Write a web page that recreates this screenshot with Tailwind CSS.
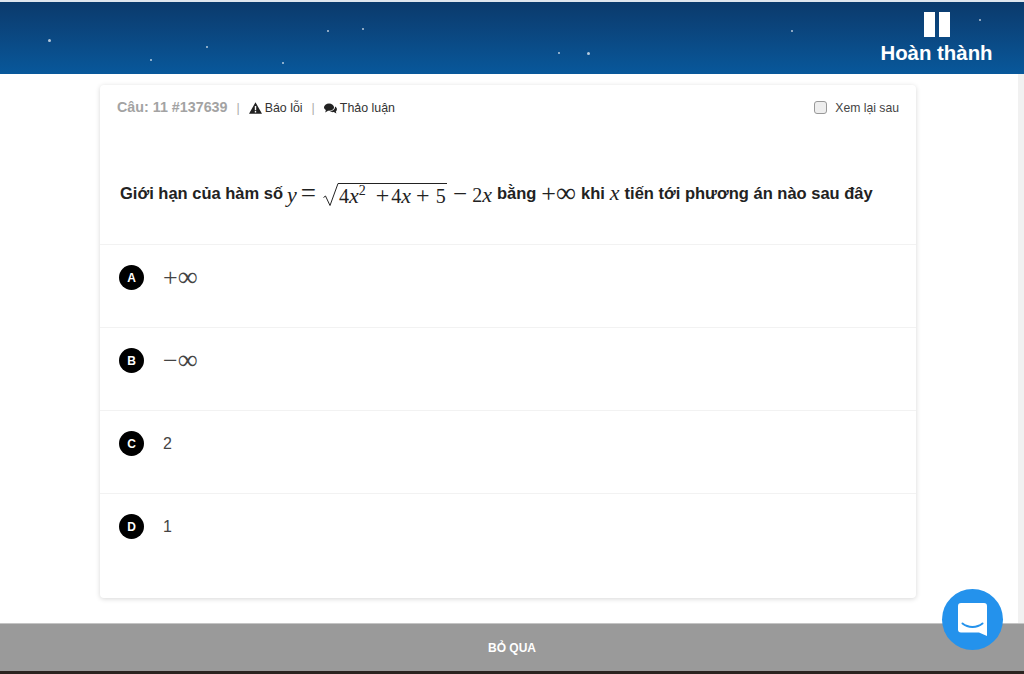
<!DOCTYPE html>
<html lang="vi">
<head>
    <meta charset="UTF-8">
    <meta name="viewport" content="width=device-width, initial-scale=1.0">
    <title>Câu hỏi</title>
    <script src="https://cdn.jsdelivr.net/npm/@tailwindcss/browser@4"></script>
</head>
<body class="font-['Liberation_Sans',Arial,sans-serif] overflow-hidden">
    <div class="relative flex flex-col w-[1024px] h-[674px] bg-white">
        <!-- Header -->
        <header class="relative h-[74px] shrink-0 border-t-2 border-[#dfe6ee] bg-gradient-to-b from-[#0b3a6c] to-[#08589b] flex justify-end">
            <span class="absolute left-[48px] top-[37px] w-[3px] h-[3px] rounded-full bg-white/70"></span>
            <span class="absolute left-[150px] top-[57px] w-[2px] h-[2px] rounded-full bg-white/70"></span>
            <span class="absolute left-[206px] top-[44px] w-[2px] h-[2px] rounded-full bg-white/70"></span>
            <span class="absolute left-[282px] top-[60px] w-[2px] h-[2px] rounded-full bg-white/70"></span>
            <span class="absolute left-[327px] top-[28px] w-[2px] h-[2px] rounded-full bg-white/70"></span>
            <span class="absolute left-[362px] top-[26px] w-[2px] h-[2px] rounded-full bg-white/70"></span>
            <span class="absolute left-[558px] top-[50px] w-[2px] h-[2px] rounded-full bg-white/70"></span>
            <span class="absolute left-[587px] top-[50px] w-[3px] h-[3px] rounded-full bg-white/70"></span>
            <span class="absolute left-[791px] top-[28px] w-[2px] h-[2px] rounded-full bg-white/70"></span>
            <span class="absolute left-[979px] top-[17px] w-[2px] h-[2px] rounded-full bg-white/70"></span>
            <div class="w-[174px] pr-[1px] pt-[10px] flex flex-col items-center">
                <div class="flex gap-[4px]">
                    <span class="w-[11px] h-[25px] bg-white"></span>
                    <span class="w-[11px] h-[25px] bg-white"></span>
                </div>
                <span class="mt-[4px] text-[20.4px] leading-[24px] font-bold text-white">Hoàn thành</span>
            </div>
        </header>

        <!-- Main -->
        <main class="flex-1 flex justify-between min-h-0">
            <div class="w-[1018px] pl-[100px] pt-[11px]">
                <div class="w-[816px] h-[513px] bg-white rounded-[4px] shadow-[0_1px_5px_rgba(0,0,0,0.16)]">
                    <div class="h-[46px] px-[17px] flex items-center justify-between">
                        <div class="flex items-center text-[12.4px] text-[#333]">
                            <span class="text-[14.3px] font-bold text-[#a3a3a3]">Câu: 11 #137639</span>
                            <span class="mx-[9px] text-[#aaa]">|</span>
                            <svg class="w-[13px] h-[12px] mr-[3px]" viewBox="0 0 13 12"><path fill="#222" fill-rule="evenodd" d="M6.5 0.3 13 11.7H0ZM5.8 4v4.2h1.4V4ZM5.8 9v1.4h1.4V9Z"/></svg>
                            <span>Báo lỗi</span>
                            <span class="mx-[9px] text-[#aaa]">|</span>
                            <svg class="w-[13px] h-[11px] mr-[3px]" viewBox="0 0 13 11"><ellipse cx="5" cy="4.2" rx="5" ry="3.6" fill="#222"/><path fill="#222" d="M2 6.5 1.2 9.4 4.5 7.6ZM11 3.6c1.5.8 2.2 2 1.8 3.3-.2.8-.6 1.3-1 1.6l.6 2-2.6-1.4c-1.4.3-3-.1-4-1 2.9-.1 5.5-1.9 5.2-4.5Z"/></svg>
                            <span>Thảo luận</span>
                        </div>
                        <label class="flex items-center text-[12.2px] text-[#444]">
                            <span class="w-[13px] h-[13px] mr-[8px] rounded-[3px] border border-[#999] bg-[#eee]"></span>
                            <span>Xem lại sau</span>
                        </label>
                    </div>

                    <!-- Question -->
                    <div class="h-[114px] pl-[20px] pt-[50px] border-b border-[#f2f2f2] flex items-start text-[16.5px] leading-[24px] font-bold text-[#222] whitespace-nowrap">
                        <span>Giới hạn của hàm số</span>
                        <span class="ml-[4px] flex items-baseline font-['Liberation_Serif',serif] font-normal text-[20px] text-[#222]">
                            <i class="text-[22px]">y</i>
                            <span class="ml-[4px] text-[27px] leading-[24px]">=</span>
                            <svg class="ml-[7px] self-start mt-[2px] w-[16px] h-[24px] shrink-0" viewBox="0 0 16 24"><path d="M0.5 14.5 2.5 13 7 22.5 15 0.5H16" fill="none" stroke="#222"/></svg>
                            <span class="flex items-baseline border-t border-[#222] self-start mt-[2px] leading-[22px] w-[108px]">
                                <span>4</span><i class="text-[22px]">x</i>
                                <span class="text-[14px] relative top-[-8px]">2</span>
                                <span class="ml-[10px] text-[24px]">+</span>
                                <span class="ml-[2px]">4</span><i class="text-[22px]">x</i>
                                <span class="ml-[5px] text-[24px]">+</span>
                                <span class="ml-[6px]">5</span>
                            </span>
                            <span class="ml-[6px] text-[25px] leading-[24px]">−</span>
                            <span class="ml-[5px]">2</span><i class="text-[22px]">x</i>
                        </span>
                        <span class="ml-[5px]">bằng</span>
                        <span class="ml-[5px] flex items-baseline font-['Liberation_Serif',serif] font-normal">
                            <span class="text-[26px]">+</span><span class="text-[28px]">∞</span>
                        </span>
                        <span class="ml-[5px]">khi</span>
                        <span class="ml-[5px] font-['Liberation_Serif',serif] font-normal italic text-[22px]">x</span>
                        <span class="ml-[5px]">tiến tới phương án nào sau đây</span>
                    </div>

                    <!-- Answers -->
                    <div class="h-[83px] pl-[19px] pt-[20px] border-b border-[#f2f2f2] flex items-start">
                        <span class="w-[25px] h-[25px] rounded-full bg-black text-white text-[12px] font-bold flex items-center justify-center">A</span>
                        <span class="ml-[19px] -mt-[1px] flex items-baseline leading-[25px] text-[#444] font-['Liberation_Serif',serif]"><span class="text-[26px]">+</span><span class="text-[28px]">∞</span></span>
                    </div>
                    <div class="h-[83px] pl-[19px] pt-[20px] border-b border-[#f2f2f2] flex items-start">
                        <span class="w-[25px] h-[25px] rounded-full bg-black text-white text-[12px] font-bold flex items-center justify-center">B</span>
                        <span class="ml-[19px] -mt-[1px] flex items-baseline leading-[25px] text-[#444] font-['Liberation_Serif',serif]"><span class="text-[26px]">−</span><span class="text-[28px]">∞</span></span>
                    </div>
                    <div class="h-[83px] pl-[19px] pt-[20px] border-b border-[#f2f2f2] flex items-start">
                        <span class="w-[25px] h-[25px] rounded-full bg-black text-white text-[12px] font-bold flex items-center justify-center">C</span>
                        <span class="ml-[19px] text-[16px] leading-[25px] text-[#444]">2</span>
                    </div>
                    <div class="pl-[19px] pt-[20px] flex items-start">
                        <span class="w-[25px] h-[25px] rounded-full bg-black text-white text-[12px] font-bold flex items-center justify-center">D</span>
                        <span class="ml-[19px] text-[16px] leading-[25px] text-[#444]">1</span>
                    </div>
                </div>
            </div>
            <!-- Scrollbar -->
            <div class="w-[6px] bg-[#f1f1f1]"></div>
        </main>

        <!-- Footer -->
        <footer class="h-[48px] shrink-0 border-t border-[#c4c4c4] bg-[#9a9a9a] flex items-center justify-center">
            <span class="text-[12px] font-bold text-white">BỎ QUA</span>
        </footer>
        <div class="h-[3px] shrink-0 bg-[#2b2420]"></div>

        <!-- Chat bubble -->
        <div class="absolute left-[942px] top-[589px] w-[61px] h-[61px] rounded-full bg-[#2492ec] flex items-center justify-center">
            <svg class="w-[29px] h-[33px]" viewBox="0 0 29 33">
                <path fill="#fff" d="M3 0H26A3 3 0 0 1 29 3V33L21 29.5H3A3 3 0 0 1 0 26.5V3A3 3 0 0 1 3 0Z"/>
                <path fill="none" stroke="#2492ec" stroke-width="2" stroke-linecap="round" d="M4.5 20.5C10 25 19 25 24.5 20.5"/>
            </svg>
        </div>
    </div>
</body>
</html>
